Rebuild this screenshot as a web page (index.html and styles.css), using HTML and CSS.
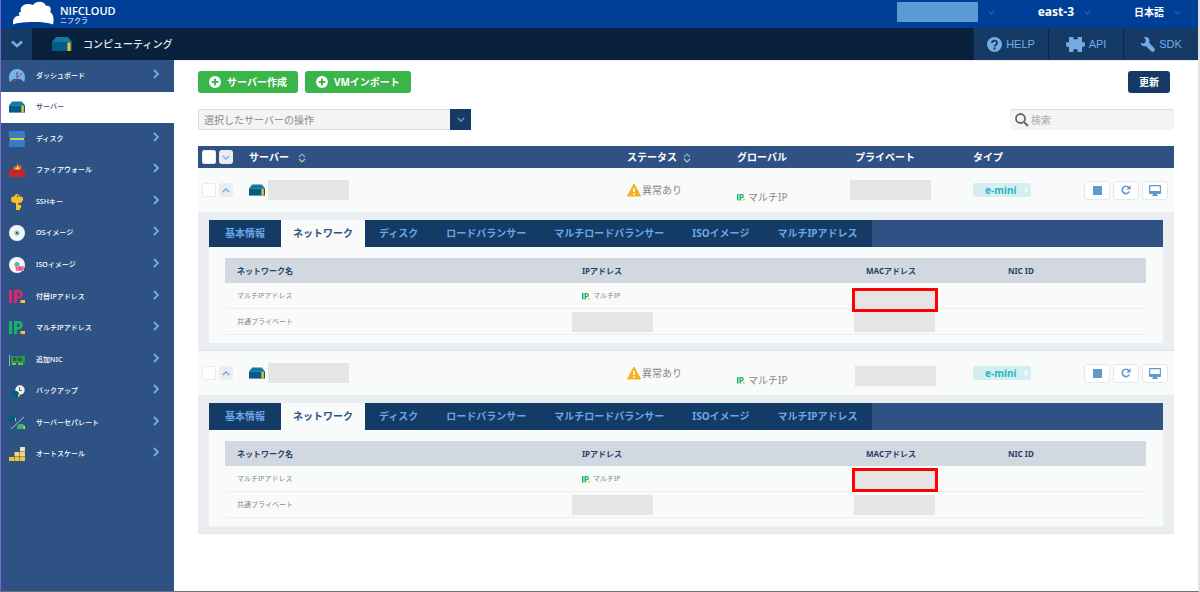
FILE: index.html
```html
<!DOCTYPE html>
<html lang="ja">
<head>
    <meta charset="UTF-8">
    <meta name="viewport" content="width=device-width, initial-scale=1.0">
    <title>コンピューティング</title>
    <link rel="stylesheet" href="styles.css">
</head>
<body>
    <!-- アイコン定義 -->
    <svg class="defs" aria-hidden="true">
        <symbol id="i-server" viewBox="0 0 20 14">
            <path d="M4 0h12l4 5H0z" fill="#127a9e"/>
            <path d="M0 5h20v9H0z" fill="#015c86"/>
            <path d="M15.500 5.500h3V14h-3z" fill="#f6c12f"/>
        </symbol>
        <symbol id="i-down" viewBox="0 0 10 6">
            <path d="M1 1l4 4 4-4" fill="none" stroke="currentColor" stroke-width="1.600"/>
        </symbol>
        <symbol id="i-up" viewBox="0 0 10 6">
            <path d="M1 5l4-4 4 4" fill="none" stroke="currentColor" stroke-width="1.800"/>
        </symbol>
        <symbol id="i-right" viewBox="0 0 6 10">
            <path d="M1 1l4 4-4 4" fill="none" stroke="currentColor" stroke-width="1.800"/>
        </symbol>
        <symbol id="i-plus" viewBox="0 0 12 12">
            <circle cx="6" cy="6" r="6" fill="#fff"/>
            <path d="M6 2.800v6.400M2.800 6h6.400" stroke="#3ab54a" stroke-width="2"/>
        </symbol>
        <symbol id="i-sort" viewBox="0 0 8 10">
            <path d="M1 4l3-3 3 3" fill="none" stroke="#7fb2e5" stroke-width="1.200"/>
            <path d="M1 6l3 3 3-3" fill="none" stroke="#cfc7a0" stroke-width="1.200"/>
        </symbol>
        <symbol id="i-warn" viewBox="0 0 14 14">
            <path d="M7 1l6.500 12H.5z" fill="#f6b01e" stroke="#f6b01e" stroke-linejoin="round"/>
            <path d="M7 5v4M7 10.300v1.600" stroke="#fff" stroke-width="1.600"/>
        </symbol>
        <symbol id="i-ip" viewBox="0 0 16 14">
            <path d="M0 0h3v13H0zM5 0h4.500a4 4 0 0 1 0 8.500H8V13H5zM8 2.500V6h1.300a1.700 1.700 0 0 0 0-3.500z" fill="currentColor" fill-rule="evenodd"/>
            <path d="M11.500 10H16v3h-4.500z" fill="#f9c22e"/>
        </symbol>
        <symbol id="i-reload" viewBox="0 0 10 10">
            <path d="M8.300 6.500A3.700 3.700 0 1 1 7.800 2.600" fill="none" stroke="currentColor" stroke-width="1.700"/>
            <path d="M9.600.3v4.200H5.400z" fill="currentColor"/>
        </symbol>
        <symbol id="i-screen" viewBox="0 0 12 11">
            <path d="M1 0h10q1 0 1 1v7q0 1-1 1H8v1h1v1H3v-1h1V9H1Q0 9 0 8V1q0-1 1-1zM1.200 1.200V6h9.600V1.200z" fill="currentColor" fill-rule="evenodd"/>
        </symbol>
    </svg>

    <header class="topbar">
        <a class="logo" href="#">
            <svg width="41" height="25" viewBox="0 0 41 25" aria-hidden="true">
                <path d="M0 24.500C-1 19 3 15 7 16 5 13 6 12 8 12 6 6 13 2 20 5 22 1 31 0 33 6c4-1 6 3 4 6 4 2 4 8 3 12.500C34 21 6 21 0 24.500z" fill="#fff"/>
            </svg>
            <span class="logo-text">
                <span class="logo-name">NIFCLOUD</span>
                <span class="logo-kana">ニフクラ</span>
            </span>
        </a>
        <div class="top-menu">
            <button type="button" class="top-item" aria-label="アカウント"><span class="account"></span><svg class="caret"><use href="#i-down"/></svg></button>
            <button type="button" class="top-item region">east-3<svg class="caret"><use href="#i-down"/></svg></button>
            <button type="button" class="top-item">日本語<svg class="caret"><use href="#i-down"/></svg></button>
        </div>
    </header>

    <div class="servicebar">
        <button type="button" class="service-toggle" aria-label="サービス一覧">
            <svg width="12" height="8" viewBox="0 0 12 8"><path d="M1 1.500l5 4.500 5-4.500" fill="none" stroke="currentColor" stroke-width="2.600"/></svg>
        </button>
        <h1 class="service-name"><svg width="20" height="14"><use href="#i-server"/></svg>コンピューティング</h1>
        <nav class="links">
            <a href="#">
                <svg width="15" height="15" viewBox="0 0 15 15"><circle cx="7.500" cy="7.500" r="7.500" fill="currentColor"/><path d="M5 6a2.500 2.300 0 1 1 3.500 2q-1 .5-1 1.500M7.500 10.500v2" fill="none" stroke="#153a66" stroke-width="1.800"/></svg>HELP
            </a>
            <a href="#">
                <svg width="19" height="15" viewBox="0 0 19 15"><path d="M3 0h4.500q-1 2.500 2 2.500t2-2.500H16v5.500q3-1.500 3 2t-3 2V15h-4.500q1-3-2-3t-2 3H3V9.500q-3 1.500-3-2t3-2z" fill="currentColor"/></svg>API
            </a>
            <a href="#">
                <svg width="15" height="15" viewBox="0 0 15 15"><path d="M4 0q5-.5 5.500 3.500L9.200 5.700l5.300 5.800q.9 1.500-.3 2.700t-2.700.3L6 9.200Q1.500 10 .5 6l3 .6 2.200-1.500-.2-2.600z" fill="currentColor"/></svg>SDK
            </a>
        </nav>
    </div>

    <div class="layout">
        <nav class="sidebar">
            <ul>
                <li><a href="#">
                    <svg class="icon" viewBox="0 0 16 16"><path d="M1 14Q0 12 0 9a8 8 0 0 1 16 0q0 3-1 5l-3.500-3h-7z" fill="#79b0e8"/><path d="M8 4v6" stroke="#2f5285"/><path d="M13 5l-8 9" stroke="#c2338a"/></svg>
                    <span>ダッシュボード</span><svg class="arrow"><use href="#i-right"/></svg></a></li>
                <li class="active"><a href="#">
                    <svg class="icon"><use href="#i-server"/></svg>
                    <span>サーバー</span></a></li>
                <li><a href="#">
                    <svg class="icon" viewBox="0 0 16 16"><path d="M0 0h16v7H0zM0 9h16v7H0z" fill="#3a7cc4"/><path d="M1 7h14v2H1z" fill="#c5d93a"/></svg>
                    <span>ディスク</span><svg class="arrow"><use href="#i-right"/></svg></a></li>
                <li><a href="#">
                    <svg class="icon" viewBox="0 0 16 16"><path d="M4 8q0-3 2-4l1 1 1.500-4L10 4l1.500-1Q13 6 12 8z" fill="#f26a21"/><path d="M6 8q0-2 1.500-2L8.500 4 10 6q1 1 0 2z" fill="#ffe23b"/><path d="M0 7.500h16V15H0z" fill="#c1272d"/></svg>
                    <span>ファイアウォール</span><svg class="arrow"><use href="#i-right"/></svg></a></li>
                <li><a href="#">
                    <svg class="icon" viewBox="0 0 16 16"><path d="M5.500 2.500a2.500 2.500 0 0 1 5 0q4-.5 3.500 3t-4.500 3.500v2H12V14h-1v2H7V9Q2 9 2 5.500t3.500-3zM8 1.300v2h1.200v-2z" fill="#f6c12f" fill-rule="evenodd"/></svg>
                    <span>SSHキー</span><svg class="arrow"><use href="#i-right"/></svg></a></li>
                <li><a href="#">
                    <svg class="icon" viewBox="0 0 16 16"><circle cx="8" cy="8" r="8" fill="#f5f5f5"/><circle cx="8" cy="8" r="2.700" fill="#8fd0c8"/><circle cx="8" cy="8" r="1.200" fill="#2c6b78"/></svg>
                    <span>OSイメージ</span><svg class="arrow"><use href="#i-right"/></svg></a></li>
                <li><a href="#">
                    <svg class="icon" viewBox="0 0 16 16"><circle cx="8" cy="8" r="8" fill="#f5f5f5"/><circle cx="8" cy="7.500" r="2.500" fill="#57b8ae"/><path d="M6 9h9v5H7z" fill="#f08cb4"/><path d="M8 10v3M9.500 10.500h2l-1.500 2h2M13 10v3" stroke="#d8206f" stroke-width=".8" fill="none"/></svg>
                    <span>ISOイメージ</span><svg class="arrow"><use href="#i-right"/></svg></a></li>
                <li><a href="#">
                    <svg class="icon pink"><use href="#i-ip"/></svg>
                    <span>付替IPアドレス</span><svg class="arrow"><use href="#i-right"/></svg></a></li>
                <li><a href="#">
                    <svg class="icon green"><use href="#i-ip"/></svg>
                    <span>マルチIPアドレス</span><svg class="arrow"><use href="#i-right"/></svg></a></li>
                <li><a href="#">
                    <svg class="icon" viewBox="0 0 16 16"><path d="M0 3h1v11H0z" fill="#9aa8b8"/><path d="M2 4h14v7H2z" fill="#1fa04a"/><path d="M4 5.500h3.500v3.500H4zM9 5.500h3.500v3.500H9z" fill="#4a4a55"/><path d="M3 11h4v2H3zM9 11h5v2H9z" fill="#7bc043"/></svg>
                    <span>追加NIC</span><svg class="arrow"><use href="#i-right"/></svg></a></li>
                <li><a href="#">
                    <svg class="icon" viewBox="0 0 16 16"><circle cx="11" cy="7" r="4.700" fill="#f5f5f5"/><path d="M10.500 4v3.500H13" stroke="#556" fill="none"/><path d="M4 8h4l2 2v4H3v-4z" fill="#015c86"/><path d="M9 11h1.500v3H9z" fill="#f6c12f"/></svg>
                    <span>バックアップ</span><svg class="arrow"><use href="#i-right"/></svg></a></li>
                <li><a href="#">
                    <svg class="icon" viewBox="0 0 16 16"><path d="M1 1h4l2 2v3H0V3z" fill="#015c86"/><path d="M6 3h1v3H6z" fill="#c5d93a"/><path d="M15 2L2 14" stroke="#a9bdd6"/><path d="M10 9h4l2 2v3H8v-3z" fill="#3ab56a"/><path d="M14.500 11H16v3h-1.500z" fill="#c5d93a"/></svg>
                    <span>サーバーセパレート</span><svg class="arrow"><use href="#i-right"/></svg></a></li>
                <li><a href="#">
                    <svg class="icon" viewBox="0 0 16 16"><path d="M0 11h5v4H0zM5.500 11h5v4h-5zM11 11h5v4h-5z" fill="#f6c12f"/><path d="M5.500 6h5v4.500h-5zM11 6h5v4.500h-5z" fill="#f3d27a"/><path d="M11 1h5v4.500h-5z" fill="#f4e3bb"/></svg>
                    <span>オートスケール</span><svg class="arrow"><use href="#i-right"/></svg></a></li>
            </ul>
        </nav>

        <main class="content">
            <div class="actions">
                <button type="button" class="btn btn-green"><svg width="12" height="12"><use href="#i-plus"/></svg>サーバー作成</button>
                <button type="button" class="btn btn-green"><svg width="12" height="12"><use href="#i-plus"/></svg>VMインポート</button>
                <button type="button" class="btn btn-navy">更新</button>
            </div>

            <div class="filters">
                <div class="select-box">
                    <select aria-label="選択したサーバーの操作">
                        <option>選択したサーバーの操作</option>
                    </select>
                    <span class="select-arrow"><svg width="8" height="5"><use href="#i-down"/></svg></span>
                </div>
                <label class="search">
                    <svg width="14" height="14" viewBox="0 0 14 14"><circle cx="5.500" cy="5.500" r="4.500" fill="none" stroke="#666" stroke-width="1.800"/><path d="M9 9l4 4" stroke="#666" stroke-width="2.200"/></svg>
                    <input type="text" placeholder="検索" aria-label="検索">
                </label>
            </div>

            <table class="servers">
                <colgroup>
                    <col class="c-check"><col><col class="c-status"><col class="c-ip"><col class="c-ip"><col class="c-type"><col class="c-tools">
                </colgroup>
                <thead>
                    <tr>
                        <th><div class="pick"><input type="checkbox" aria-label="すべて選択"><button type="button" class="fold" aria-label="すべて開く"><svg width="8" height="5"><use href="#i-down"/></svg></button></div></th>
                        <th>サーバー<svg class="sort"><use href="#i-sort"/></svg></th>
                        <th>ステータス<svg class="sort near"><use href="#i-sort"/></svg></th>
                        <th>グローバル</th>
                        <th>プライベート</th>
                        <th>タイプ</th>
                        <th></th>
                    </tr>
                </thead>
                <tbody>
                    <tr class="server">
                        <td><div class="pick"><input type="checkbox" aria-label="選択"><button type="button" class="fold" aria-label="閉じる"><svg width="8" height="5"><use href="#i-up"/></svg></button></div></td>
                        <td><div class="name"><svg width="16" height="12"><use href="#i-server"/></svg><span class="mask"></span></div></td>
                        <td><div class="status"><svg width="14" height="14"><use href="#i-warn"/></svg>異常あり</div></td>
                        <td><div class="global"><svg class="green" width="8" height="7"><use href="#i-ip"/></svg>マルチIP</div></td>
                        <td><span class="mask mask-left"></span></td>
                        <td><button type="button" class="type">e-mini<svg width="4" height="6"><use href="#i-right"/></svg></button></td>
                        <td><div class="tools">
                            <button type="button" aria-label="停止"><svg width="9" height="9"><rect width="9" height="9" fill="currentColor"/></svg></button>
                            <button type="button" aria-label="再起動"><svg width="10" height="10"><use href="#i-reload"/></svg></button>
                            <button type="button" aria-label="コンソール"><svg width="12" height="11"><use href="#i-screen"/></svg></button>
                        </div></td>
                    </tr>
                    <tr>
                        <td colspan="7" class="detail">
                            <div class="tabs">
                                <button type="button">基本情報</button>
                                <button type="button" class="on">ネットワーク</button>
                                <button type="button">ディスク</button>
                                <button type="button">ロードバランサー</button>
                                <button type="button">マルチロードバランサー</button>
                                <button type="button">ISOイメージ</button>
                                <button type="button">マルチIPアドレス</button>
                            </div>
                            <div class="panel">
                                <table class="network">
                                    <colgroup><col><col class="n-ip"><col class="n-mac"><col class="n-nic"></colgroup>
                                    <thead>
                                        <tr><th>ネットワーク名</th><th>IPアドレス</th><th>MACアドレス</th><th>NIC ID</th></tr>
                                    </thead>
                                    <tbody>
                                        <tr>
                                            <td>マルチIPアドレス</td>
                                            <td><div class="multi"><svg class="green" width="8" height="7"><use href="#i-ip"/></svg>マルチIP</div></td>
                                            <td><span class="marker marker-low"></span></td>
                                            <td></td>
                                        </tr>
                                        <tr>
                                            <td>共通プライベート</td>
                                            <td><span class="mask mask-ip"></span></td>
                                            <td><span class="mask mask-mac"></span></td>
                                            <td></td>
                                        </tr>
                                    </tbody>
                                </table>
                            </div>
                        </td>
                    </tr>
                    <tr class="server">
                        <td><div class="pick"><input type="checkbox" aria-label="選択"><button type="button" class="fold" aria-label="閉じる"><svg width="8" height="5"><use href="#i-up"/></svg></button></div></td>
                        <td><div class="name"><svg width="16" height="12"><use href="#i-server"/></svg><span class="mask"></span></div></td>
                        <td><div class="status"><svg width="14" height="14"><use href="#i-warn"/></svg>異常あり</div></td>
                        <td><div class="global"><svg class="green" width="8" height="7"><use href="#i-ip"/></svg>マルチIP</div></td>
                        <td><span class="mask mask-low"></span></td>
                        <td><button type="button" class="type">e-mini<svg width="4" height="6"><use href="#i-right"/></svg></button></td>
                        <td><div class="tools">
                            <button type="button" aria-label="停止"><svg width="9" height="9"><rect width="9" height="9" fill="currentColor"/></svg></button>
                            <button type="button" aria-label="再起動"><svg width="10" height="10"><use href="#i-reload"/></svg></button>
                            <button type="button" aria-label="コンソール"><svg width="12" height="11"><use href="#i-screen"/></svg></button>
                        </div></td>
                    </tr>
                    <tr>
                        <td colspan="7" class="detail">
                            <div class="tabs">
                                <button type="button">基本情報</button>
                                <button type="button" class="on">ネットワーク</button>
                                <button type="button">ディスク</button>
                                <button type="button">ロードバランサー</button>
                                <button type="button">マルチロードバランサー</button>
                                <button type="button">ISOイメージ</button>
                                <button type="button">マルチIPアドレス</button>
                            </div>
                            <div class="panel">
                                <table class="network">
                                    <colgroup><col><col class="n-ip"><col class="n-mac"><col class="n-nic"></colgroup>
                                    <thead>
                                        <tr><th>ネットワーク名</th><th>IPアドレス</th><th>MACアドレス</th><th>NIC ID</th></tr>
                                    </thead>
                                    <tbody>
                                        <tr>
                                            <td>マルチIPアドレス</td>
                                            <td><div class="multi"><svg class="green" width="8" height="7"><use href="#i-ip"/></svg>マルチIP</div></td>
                                            <td><span class="marker"></span></td>
                                            <td></td>
                                        </tr>
                                        <tr>
                                            <td>共通プライベート</td>
                                            <td><span class="mask mask-ip"></span></td>
                                            <td><span class="mask mask-mac"></span></td>
                                            <td></td>
                                        </tr>
                                    </tbody>
                                </table>
                            </div>
                        </td>
                    </tr>
                </tbody>
            </table>
        </main>
    </div>
</body>
</html>
```
FILE: styles.css
```css
* {
    box-sizing: border-box;
}

body {
    display: flex;
    flex-direction: column;
    min-height: 100vh;
    margin: 0;
    border-left: 1px solid #7a68cf;
    border-right: 2px solid #e3e3e3;
    border-bottom: 1px solid #706e7a;
    background-color: #fff;
    color: #888;
    font-family: "Noto Sans", "Noto Sans CJK JP", sans-serif;
    font-size: 10px;
    line-height: 16px;
}

svg {
    display: block;
    flex: none;
}

.defs {
    position: absolute;
    width: 0;
    height: 0;
}

a {
    color: inherit;
    text-decoration: none;
}

button, input, select {
    margin: 0;
    padding: 0;
    border: none;
    background: none;
    color: inherit;
    font: inherit;
}

button {
    cursor: pointer;
}

/* ヘッダー */
.topbar {
    display: flex;
    justify-content: space-between;
    height: 28px;
    padding: 0 17px 0 12px;
    background-color: #003f98;
    color: #fff;
}

.logo {
    display: flex;
    gap: 6px;
}

.logo-text {
    display: flex;
    flex-direction: column;
    padding-top: 4px;
}

.logo-name {
    font-family: "Open Sans", sans-serif;
    font-size: 11px;
    font-weight: 600;
    line-height: 13px;
}

.logo-kana {
    font-size: 7px;
    line-height: 7px;
}

.top-menu {
    display: flex;
    align-items: center;
    gap: 43px;
    padding-bottom: 4px;
}

.top-item {
    display: flex;
    align-items: center;
    gap: 10px;
    font-weight: bold;
}

.region {
    font-size: 12px;
}

.account {
    width: 81px;
    height: 20px;
    background-color: #5b9bd5;
}

.caret {
    width: 7px;
    height: 5px;
    color: #2b64b0;
}

.servicebar {
    display: flex;
    height: 32px;
    background-color: #09213d;
}

.service-toggle {
    display: flex;
    align-items: center;
    justify-content: center;
    width: 31px;
    background-color: #153a66;
    color: #74ace6;
}

.service-name {
    display: flex;
    align-items: center;
    gap: 11px;
    margin: 0 auto 0 20px;
    color: #e6ebf1;
    font-size: 10px;
    font-weight: 500;
}

.links {
    display: flex;
    color: #74ace6;
    font-family: "Liberation Sans", Arial, sans-serif;
    font-size: 11px;
}

.links a {
    display: flex;
    align-items: center;
    justify-content: center;
    gap: 4px;
    width: 75px;
    border-left: 1px solid #0d2a4c;
    background-color: #153a66;
}

/* サイドバー */
.layout {
    display: flex;
    flex: 1;
}

.sidebar {
    width: 173px;
    background-color: #2f5285;
    color: #fff;
}

.sidebar ul {
    display: grid;
    grid-template-rows: repeat(13, 1fr);
    height: 410px;
    margin: 0;
    padding: 0;
    list-style: none;
}

.sidebar a {
    display: flex;
    align-items: center;
    gap: 11px;
    height: 100%;
    padding: 0 15px 0 8px;
    font-size: 7px;
    font-weight: 500;
}

.sidebar .active {
    background-color: #fff;
    color: #2f5285;
}

.icon {
    width: 16px;
    height: 16px;
}

.arrow {
    width: 6px;
    height: 10px;
    margin: 0 0 4px auto;
    color: #74ace6;
}

.green {
    color: #18b26b;
}

.pink {
    color: #e0246e;
}

/* メイン */
.content {
    flex: 1;
    padding: 10px 24px;
    border-top: 1px solid #ececec;
}

.actions {
    display: flex;
    gap: 7px;
    padding-right: 4px;
}

.btn {
    display: flex;
    align-items: center;
    gap: 6px;
    height: 22px;
    padding: 0 11px;
    border-radius: 3px;
    color: #fff;
    font-weight: bold;
}

.btn-green {
    background-color: #3ab54a;
}

.btn-navy {
    margin-left: auto;
    background-color: #153a66;
}

.filters {
    display: flex;
    justify-content: space-between;
    margin: 16px 0;
}

.select-box {
    position: relative;
    width: 273px;
}

.select-box select {
    display: block;
    width: 100%;
    height: 21px;
    padding: 0 5px;
    border: 1px solid #ddd;
    border-radius: 2px;
    background-color: #f4f4f4;
    appearance: none;
}

.select-arrow {
    position: absolute;
    top: 0;
    right: 0;
    display: flex;
    align-items: center;
    justify-content: center;
    width: 21px;
    height: 21px;
    background-color: #153a66;
    color: #74ace6;
    pointer-events: none;
}

.search {
    display: flex;
    align-items: center;
    gap: 2px;
    width: 164px;
    height: 21px;
    padding: 0 5px;
    border-top: 1px solid #ddd;
    border-radius: 2px;
    background-color: #f4f4f4;
}

.search input {
    flex: 1;
    min-width: 0;
}

.search input::placeholder {
    color: #aaa;
}

table {
    width: 100%;
    border-collapse: collapse;
    table-layout: fixed;
}

th, td {
    padding: 0;
    text-align: left;
}

.c-check { width: 51px; }
.c-status { width: 110px; }
.c-ip { width: 118px; }
.c-type { width: 111px; }
.c-tools { width: 90px; }

.servers > thead th {
    height: 22px;
    background-color: #2f5183;
    color: #fff;
    line-height: 20px;
}

.sort {
    display: inline-block;
    width: 8px;
    height: 10px;
    margin-left: 9px;
    vertical-align: -2px;
}

.sort.near {
    margin-left: 6px;
}

.server td {
    height: 44px;
    background-color: #f9fbfa;
}

.pick {
    display: flex;
    gap: 3px;
    padding-left: 4px;
}

.pick input {
    width: 14px;
    height: 14px;
    border: 1px solid #e8eaec;
    border-radius: 2px;
    background-color: #fff;
    appearance: none;
}

.fold {
    display: flex;
    align-items: center;
    justify-content: center;
    width: 14px;
    height: 14px;
    border-radius: 3px;
    background-color: #e9edf2;
    color: #74ace6;
}

.name {
    display: flex;
    align-items: center;
    gap: 3px;
}

.status {
    display: flex;
    align-items: center;
    gap: 1px;
}

.global {
    display: flex;
    align-items: center;
    gap: 3px;
    margin-top: 14px;
}

/* 伏せ字 */
.mask {
    display: block;
    width: 81px;
    height: 20px;
    background-color: #e5e5e5;
}

.mask-left { margin-left: -5px; }
.mask-low { margin-top: 6px; }
.mask-ip { margin-left: -10px; }
.mask-mac { margin-left: -12px; }

.marker {
    position: absolute;
    top: 2px;
    left: -2px;
    width: 86px;
    height: 24px;
    border: 3px solid #f00;
    background-color: #e5e5e5;
}

.marker-low {
    top: 5px;
}

.type {
    display: flex;
    align-items: center;
    justify-content: space-between;
    width: 58px;
    height: 14px;
    padding: 0 3px 0 12px;
    border-radius: 2px;
    background-color: #d4eff2;
    color: #2fb4c4;
    font-weight: bold;
}

.type svg {
    color: #fff;
}

.tools {
    display: flex;
    gap: 3px;
}

.tools button {
    display: flex;
    align-items: center;
    justify-content: center;
    width: 26px;
    height: 19px;
    border: 1px solid #e6e8ea;
    border-radius: 3px;
    background-color: #fff;
    color: #6098d0;
}

.detail {
    padding: 8px 11px;
    background-color: #eaeef2;
    box-shadow: inset 0 -1px #e0e3e7;
}

.tabs {
    display: flex;
    height: 27px;
    background-color: #2f5183;
}

.tabs button {
    padding: 0 14px 2px;
    background-color: #143a66;
    color: #6aa7e6;
    font-weight: bold;
}

.tabs button:first-child {
    padding: 0 16px 2px;
}

.tabs .on {
    padding: 0 12px 2px;
    background-color: #f9fbfa;
    color: #2f5183;
}

.panel {
    padding: 11px 17px 8px 16px;
    background-color: #f9fbfa;
}

.n-ip { width: 284px; }
.n-mac { width: 142px; }
.n-nic { width: 150px; }

.network th {
    height: 25px;
    padding-left: 12px;
    background-color: #d2d8e0;
    color: #25426b;
    font-size: 8px;
}

.network td {
    position: relative;
    height: 26px;
    padding-left: 12px;
    box-shadow: inset 0 -1px #eceff0;
    font-size: 7px;
}

.multi {
    display: flex;
    align-items: center;
    gap: 3px;
}
```
